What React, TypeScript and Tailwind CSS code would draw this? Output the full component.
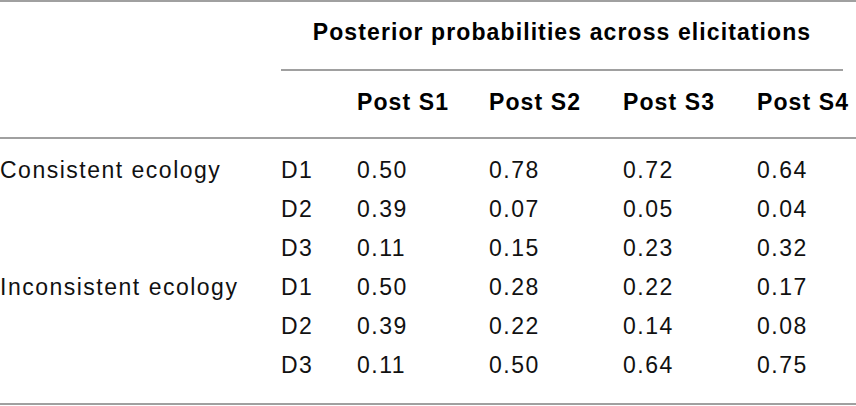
const groups = [
  {
    label: 'Consistent ecology',
    rows: [
      ['D1', '0.50', '0.78', '0.72', '0.64'],
      ['D2', '0.39', '0.07', '0.05', '0.04'],
      ['D3', '0.11', '0.15', '0.23', '0.32'],
    ],
  },
  {
    label: 'Inconsistent ecology',
    rows: [
      ['D1', '0.50', '0.28', '0.22', '0.17'],
      ['D2', '0.39', '0.22', '0.14', '0.08'],
      ['D3', '0.11', '0.50', '0.64', '0.75'],
    ],
  },
];

const cols = 'grid grid-cols-[281px_76px_132px_134px_134px_1fr]';

export default function App() {
  return (
    <div className="w-[856px] h-[406px] bg-white text-[#111] text-[23px] leading-[39px] tracking-[1.1px] font-['Liberation_Sans',Arial,sans-serif]">
      <div className="border-t-2 border-[#a0a0a0]" />

      {/* spanner heading */}
      <div className="ml-[281px] mr-[13px] pt-[11px] pb-[17px] text-center font-bold text-black">
        Posterior probabilities across elicitations
      </div>
      <div className="ml-[281px] mr-[13px] h-[2px] bg-[#a0a0a0]" />

      {/* column heads */}
      <div className={`${cols} pt-[12px] pb-[15px] font-bold text-black`}>
        <div />
        <div />
        <div>Post S1</div>
        <div>Post S2</div>
        <div>Post S3</div>
        <div className="whitespace-nowrap">Post S4</div>
      </div>
      <div className="h-[2px] bg-[#a0a0a0]" />

      {/* body */}
      <div className="pt-[12px] pb-[18px] tracking-[1.5px]">
        {groups.map((g) =>
          g.rows.map((r, i) => (
            <div key={g.label + r[0]} className={cols}>
              <div className="whitespace-nowrap">{i === 0 ? g.label : ''}</div>
              {r.map((v, j) => (
                <div key={j}>{v}</div>
              ))}
            </div>
          ))
        )}
      </div>
      <div className="h-[2px] bg-[#a0a0a0]" />
    </div>
  );
}
